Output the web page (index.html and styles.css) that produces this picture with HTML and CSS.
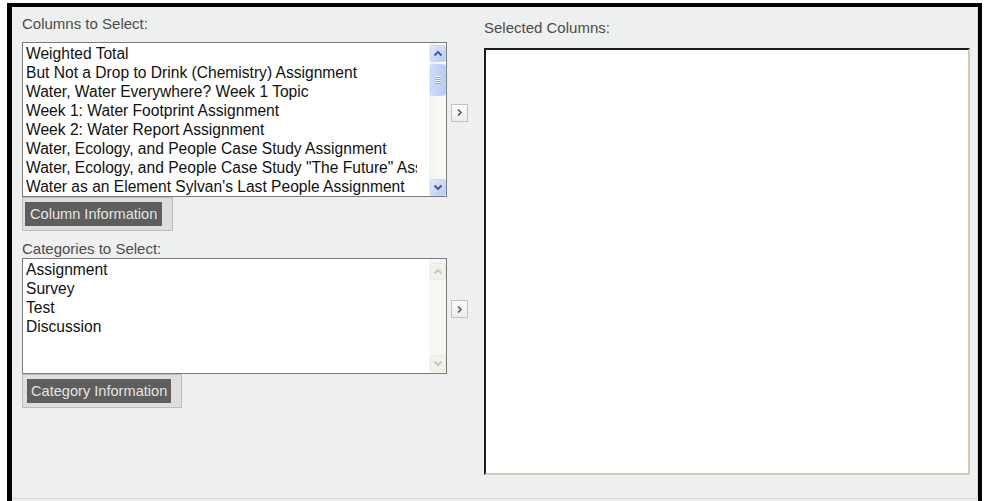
FILE: index.html
```html
<!DOCTYPE html>
<html lang="en">
<head>
<meta charset="utf-8">
<title>Select Columns</title>
<link rel="stylesheet" href="styles.css">
</head>
<body>
<div class="frame">
  <div class="panel">
    <div class="left">
      <div class="label">Columns to Select:</div>
      <div class="pick-row first">
        <div class="listbox cols">
          <ul class="items">
            <li>Weighted Total</li>
            <li>But Not a Drop to Drink (Chemistry) Assignment</li>
            <li>Water, Water Everywhere? Week 1 Topic</li>
            <li>Week 1: Water Footprint Assignment</li>
            <li>Week 2: Water Report Assignment</li>
            <li>Water, Ecology, and People Case Study Assignment</li>
            <li>Water, Ecology, and People Case Study "The Future" Assignment</li>
            <li>Water as an Element Sylvan's Last People Assignment</li>
          </ul>
          <div class="vscroll">
            <span class="sb-btn">
              <svg width="16" height="17" viewBox="0 0 16 17"><defs><linearGradient id="xpBtn" x1="0" y1="0" x2="1" y2="1"><stop offset="0" stop-color="#e3ebfe"/><stop offset="1" stop-color="#b4c8f8"/></linearGradient></defs><rect x="0.5" y="0.5" width="15" height="16" rx="2" fill="url(#xpBtn)" stroke="#c6d5fb"/><path d="M4.5 10.5 L8 7 L11.5 10.5" fill="none" stroke="#4d6185" stroke-width="2"/></svg>
            </span>
            <span class="sb-thumb">
              <svg width="16" height="32" viewBox="0 0 16 32"><defs><linearGradient id="xpThumb" x1="0" y1="0" x2="1" y2="0"><stop offset="0" stop-color="#cfdcfd"/><stop offset="1" stop-color="#b9cbf8"/></linearGradient></defs><rect x="0.5" y="0.5" width="15" height="31" rx="2" fill="url(#xpThumb)" stroke="#c4d3fb"/><path d="M5 12.5 H11 M5 14.5 H11 M5 16.5 H11 M5 18.5 H11" stroke="#eef3ff" stroke-width="1"/><path d="M5 13.5 H11 M5 15.5 H11 M5 17.5 H11 M5 19.5 H11" stroke="#93a9dd" stroke-width="1"/></svg>
            </span>
            <span class="sb-track"></span>
            <span class="sb-btn">
              <svg width="16" height="17" viewBox="0 0 16 17"><rect x="0.5" y="0.5" width="15" height="16" rx="2" fill="url(#xpBtn)" stroke="#c6d5fb"/><path d="M4.5 6.5 L8 10 L11.5 6.5" fill="none" stroke="#4d6185" stroke-width="2"/></svg>
            </span>
          </div>
        </div>
        <span class="move">
          <svg width="7" height="9" viewBox="0 0 7 9"><path d="M2 1.5 L5 4.5 L2 7.5" fill="none" stroke="#5a5a5a" stroke-width="1.6"/></svg>
        </span>
      </div>
      <div class="info-wrap"><span class="info-btn">Column Information</span></div>

      <div class="label cat-label">Categories to Select:</div>
      <div class="pick-row">
        <div class="listbox cats">
          <ul class="items">
            <li>Assignment</li>
            <li>Survey</li>
            <li>Test</li>
            <li>Discussion</li>
          </ul>
          <div class="vscroll off">
            <span class="sb-btn">
              <svg width="16" height="17" viewBox="0 0 16 17"><rect x="0.5" y="0.5" width="15" height="16" rx="2" fill="#f3f2ea" stroke="#ebe9df"/><path d="M4.5 10.5 L8 7 L11.5 10.5" fill="none" stroke="#cac8be" stroke-width="2"/></svg>
            </span>
            <span class="sb-track"></span>
            <span class="sb-btn">
              <svg width="16" height="17" viewBox="0 0 16 17"><rect x="0.5" y="0.5" width="15" height="16" rx="2" fill="#f3f2ea" stroke="#ebe9df"/><path d="M4.5 6.5 L8 10 L11.5 6.5" fill="none" stroke="#cac8be" stroke-width="2"/></svg>
            </span>
          </div>
        </div>
        <span class="move">
          <svg width="7" height="9" viewBox="0 0 7 9"><path d="M2 1.5 L5 4.5 L2 7.5" fill="none" stroke="#5a5a5a" stroke-width="1.6"/></svg>
        </span>
      </div>
      <div class="info-wrap wide"><span class="info-btn">Category Information</span></div>
    </div>

    <div class="right">
      <div class="label">Selected Columns:</div>
      <div class="selected"></div>
    </div>
  </div>
</div>
</body>
</html>
```

FILE: styles.css
```css
* {
  box-sizing: border-box;
}

html,
body {
  margin: 0;
  height: 100%;
  overflow: hidden;
  background: #ffffff;
}

body {
  font-family: "Liberation Sans", Arial, sans-serif;
  font-size: 15px;
}

/* outer black frame, open at the bottom */
.frame {
  margin: 3px 0 0 7px;
  width: 975px;
  height: 498px;
  border-style: solid;
  border-color: #000;
  border-width: 4px 4px 0 5px;
  background: #eeefef;
}

.panel {
  display: flex;
  height: 492px;
  padding: 8px 7px 0 10px;
  border-right: 1px solid #d9d9d9;
  border-bottom: 1px solid #dcd5d5;
  background: #eeefef;
}

.left {
  width: 446px;
  display: flex;
  flex-direction: column;
  align-items: flex-start;
}

.right {
  flex: 1;
  margin-left: 16px;
  padding-top: 4px;
}

.label {
  line-height: 18px;
  color: #4c4c4c;
  white-space: nowrap;
}

.pick-row {
  display: flex;
  align-items: center;
  gap: 4px;
}

.pick-row.first {
  margin-top: 9px;
}

.listbox {
  display: flex;
  width: 425px;
  border: 1px solid #7c7c7c;
  background: #fff;
  overflow: hidden;
}

.listbox.cols {
  height: 155px;
}

.listbox.cats {
  height: 116px;
}

.items {
  flex: 1;
  min-width: 0;
  margin: 0 12px 0 0;
  padding: 1px 0 0 3px;
  list-style: none;
  font-size: 15.6px;
  line-height: 19px;
  color: #111;
  white-space: nowrap;
  overflow: hidden;
}

/* XP style vertical scrollbar */
.vscroll {
  width: 17px;
  display: flex;
  flex-direction: column;
  padding: 2px 0 0 1px;
  background: linear-gradient(90deg, #f3f3ee, #fbfbf8);
}

.vscroll.off {
  padding-top: 4px;
  padding-bottom: 1px;
  background: #f8f7f1;
}

.sb-btn,
.sb-thumb {
  display: block;
  height: 17px;
  line-height: 0;
}

.sb-thumb {
  height: 32px;
  margin-top: 2px;
}

.sb-track {
  flex: 1;
}

.move {
  width: 17px;
  height: 18px;
  margin-bottom: 14px;
  display: flex;
  align-items: center;
  justify-content: center;
  border: 1px solid #c2c2c2;
  background: linear-gradient(#fbfbfb, #ececec);
}

.info-wrap {
  padding: 4px 10px 4px 2px;
  border: 1px solid #bdbdbd;
  background: #dedede;
}

.info-wrap.wide {
  padding-left: 4px;
}

.info-btn {
  display: block;
  height: 24px;
  padding: 0 5px;
  font-size: 14.6px;
  line-height: 24px;
  background: #5e5e5e;
  color: #e4e4e4;
  white-space: nowrap;
}

.info-wrap.wide .info-btn {
  padding: 0 4px;
}

.cat-label {
  margin-top: 9px;
}

.selected {
  height: 427px;
  margin-top: 11px;
  border-style: solid;
  border-width: 2px;
  border-color: #1c1c1c #d8c9b7 #d8c9b7 #1c1c1c;
  background: #fff;
}
```
